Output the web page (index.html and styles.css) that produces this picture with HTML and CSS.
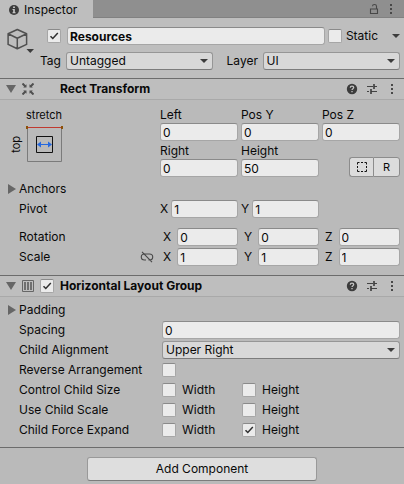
FILE: index.html
```html
<!DOCTYPE html>
<html lang="en">
<head>
<meta charset="utf-8">
<title>Inspector</title>
<link rel="stylesheet" href="styles.css">
</head>
<body>
<svg class="defs" aria-hidden="true">
  <symbol id="help" viewBox="0 0 12 12"><circle cx="6" cy="6" r="5.2" fill="#3c3c3c"/><path d="M4.3 4.8C4.3 3.6 5 3.1 6 3.1S7.7 3.7 7.7 4.6C7.7 5.7 6 5.7 6 7.1M6 8v1.3" fill="none" stroke="#c4c4c4" stroke-width="1.3"/></symbol>
  <symbol id="preset" viewBox="0 0 12 12"><path d="M1 3.500h6M8 3.500h3M1 8.500h2M5 8.500h6" fill="none" stroke="#444" stroke-width="1"/><path d="M8 1v5M5 6v5" fill="none" stroke="#3c3c3c" stroke-width="1.600"/></symbol>
  <symbol id="dots" viewBox="0 0 4 12"><path d="M1 1h2v2H1zM1 5h2v2H1zM1 9h2v2H1z" fill="#484848"/></symbol>
</svg>
<main class="inspector">
  <header class="tabbar">
    <div class="tab">
      <svg class="info" viewBox="0 0 12 12" aria-hidden="true"><circle cx="6" cy="6" r="5" fill="#3c3c3c"/><path d="M5.1 2.5h1.8v1.6H5.1zM4.5 5h2.3v3.2h.8v1H4.5v-1h.7V6h-.7z" fill="#cbcbcb"/></svg>
      Inspector
    </div>
    <div class="tab-tools">
      <button class="icon-btn" aria-label="Lock"><svg width="10" height="12" viewBox="0 0 10 12"><path d="M1.5 6h7v4.5h-7zM7.5 6V3.2C7.5 1 3.5 1 3.5 3.2" fill="none" stroke="#484848" stroke-width="1.1"/></svg></button>
      <button class="icon-btn" aria-label="Menu"><svg width="4" height="12"><use href="#dots"/></svg></button>
    </div>
  </header>

  <section class="object">
    <svg class="cube" viewBox="0 0 28 30" aria-hidden="true"><path d="M10.3 2.500l9.300 4.300v10.600l-9.300 4.400-9.200-4.400V6.800zM1.100 6.800l9.200 4.400 9.300-4.400M10.300 11.200v10.600" fill="none" stroke="#505050" stroke-width="1.500" stroke-linejoin="round"/><path d="M19.500 22h7.500l-3.750 4z" fill="#3c3c3c"/></svg>
    <div class="object-rows">
      <div class="name-row">
        <input class="check" type="checkbox" aria-label="Active" checked>
        <input class="field name" type="text" aria-label="Name" value="Resources">
        <label class="tick"><input class="check" type="checkbox"> Static</label>
        <button class="icon-btn static-menu" aria-label="Static options"><svg width="8" height="4" viewBox="0 0 8 4"><path d="M0 0h8L4 4z" fill="#3c3c3c"/></svg></button>
      </div>
      <div class="tag-row">
        <label class="tag-label" for="tag">Tag</label>
        <select id="tag" class="select tag"><option>Untagged</option></select>
        <label class="layer-label" for="layer">Layer</label>
        <select id="layer" class="select layer"><option>UI</option></select>
      </div>
    </div>
  </section>

  <section class="component">
    <header class="head">
      <button class="fold open" aria-label="Collapse Rect Transform"></button>
      <svg class="type-icon" viewBox="0 0 12 12" aria-hidden="true"><path d="M.5 .5l3 3M11.500 .5l-3 3M.5 11.500l3-3M11.500 11.500l-3-3" stroke="#505050" stroke-width="2"/><path d="M1.200 4.500h3.300V1.200zM10.800 4.500H7.500V1.200zM1.200 7.500h3.300v3.300zM10.800 7.500H7.500v3.300z" fill="#505050"/></svg>
      <h2>Rect Transform</h2>
      <button class="icon-btn" aria-label="Help"><svg width="12" height="12"><use href="#help"/></svg></button>
      <button class="icon-btn" aria-label="Presets"><svg width="12" height="12"><use href="#preset"/></svg></button>
      <button class="icon-btn" aria-label="Menu"><svg width="4" height="12"><use href="#dots"/></svg></button>
    </header>
    <div class="rect">
      <div class="anchor">
        <span class="anchor-x">stretch</span>
        <span class="anchor-y">top</span>
        <button class="icon-btn" aria-label="Anchor presets"><svg width="38" height="38" viewBox="0 0 38 38"><path d="M1.500 2v34.500h34V2" fill="none" stroke="#7b7b7b"/><path d="M1 2.500h35" stroke="#c03a30"/><path d="M0 1h2v3H0zM35 1h2v3h-2z" fill="#8a5208"/><path d="M10.500 11.500h16v16h-16z" fill="none" stroke="#111"/><path d="M12 19.500h13" stroke="#2468e0"/><path d="M11 19.500l4-3v6zM26 19.500l-4-3v6z" fill="#2468e0"/></svg></button>
      </div>
      <div class="triple stacked">
        <label>Left<input class="field" value="0"></label>
        <label>Pos Y<input class="field" value="0"></label>
        <label>Pos Z<input class="field" value="0"></label>
        <label>Right<input class="field" value="0"></label>
        <label>Height<input class="field" value="50"></label>
        <div class="modes">
          <button aria-label="Blueprint mode"><svg width="10" height="10" viewBox="0 0 10 10"><path d="M.5 2.500V.5h2M4 .5h2M7.500 .5h2v2M9.500 4v2M9.500 7.500v2h-2M6 9.500H4M2.500 9.500h-2v-2M.5 6V4" fill="none" stroke="#111"/></svg></button>
          <button>R</button>
        </div>
      </div>
    </div>
    <div class="rows">
      <div class="row"><button class="fold" aria-label="Expand Anchors"></button><span class="label">Anchors</span></div>
      <div class="row"><span class="label">Pivot</span>
        <div class="triple pivot"><label>X<input class="field" value="1"></label><label>Y<input class="field" value="1"></label></div></div>
    </div>
    <div class="rows spaced">
      <div class="row"><span class="label">Rotation</span>
        <div class="triple vector"><label>X<input class="field" value="0"></label><label>Y<input class="field" value="0"></label><label>Z<input class="field" value="0"></label></div></div>
      <div class="row"><span class="label">Scale
        <button class="icon-btn link" aria-label="Link scale axes"><svg width="14" height="12" viewBox="0 0 14 12"><path d="M6 9H4.500C.2 9 .2 3 4.500 3H9.500C13.800 3 13.800 9 9.500 9H8.500M2 .8l10 10.400" fill="none" stroke="#484848" stroke-width="1.100"/></svg></button></span>
        <div class="triple vector"><label>X<input class="field" value="1"></label><label>Y<input class="field" value="1"></label><label>Z<input class="field" value="1"></label></div></div>
    </div>
  </section>

  <section class="component">
    <header class="head">
      <button class="fold open" aria-label="Collapse Horizontal Layout Group"></button>
      <svg class="type-icon" viewBox="0 0 12 12" aria-hidden="true"><path d="M.5 .5h11v11H.5z" fill="none" stroke="#666"/><path d="M3 2v8M6 2v8M9 2v8" stroke="#5c5c5c" stroke-width="1.600"/></svg>
      <input class="check" type="checkbox" aria-label="Enable Horizontal Layout Group" checked>
      <h2>Horizontal Layout Group</h2>
      <button class="icon-btn" aria-label="Help"><svg width="12" height="12"><use href="#help"/></svg></button>
      <button class="icon-btn" aria-label="Presets"><svg width="12" height="12"><use href="#preset"/></svg></button>
      <button class="icon-btn" aria-label="Menu"><svg width="4" height="12"><use href="#dots"/></svg></button>
    </header>
    <div class="rows group">
      <div class="row"><button class="fold" aria-label="Expand Padding"></button><span class="label">Padding</span></div>
      <div class="row"><label class="label" for="spacing">Spacing</label><input id="spacing" class="field" value="0"></div>
      <div class="row"><label class="label" for="align">Child Alignment</label><select id="align" class="select"><option>Upper Right</option></select></div>
      <div class="row"><label class="label" for="reverse">Reverse Arrangement</label><input id="reverse" class="check" type="checkbox"></div>
      <div class="row"><span class="label">Control Child Size</span><label class="tick"><input class="check" type="checkbox">Width</label><label class="tick"><input class="check" type="checkbox">Height</label></div>
      <div class="row"><span class="label">Use Child Scale</span><label class="tick"><input class="check" type="checkbox">Width</label><label class="tick"><input class="check" type="checkbox">Height</label></div>
      <div class="row"><span class="label">Child Force Expand</span><label class="tick"><input class="check" type="checkbox">Width</label><label class="tick"><input class="check" type="checkbox" checked>Height</label></div>
    </div>
  </section>

  <footer class="footer"><button class="add">Add Component</button></footer>
</main>
</body>
</html>
```
FILE: styles.css
```css
* { box-sizing: border-box; }

body {
  margin: 0;
  background: #bababa;
  color: #090909;
  font: 12px/16px Inter, "Liberation Sans", sans-serif;
}

button, input, select { font: inherit; color: inherit; margin: 0; }
svg { display: block; flex: none; }
.defs { position: absolute; width: 0; height: 0; }

.icon-btn {
  display: flex;
  flex: none;
  justify-content: center;
  padding: 0;
  border: 0;
  background: none;
}

/* Tab strip */
.tabbar {
  display: flex;
  justify-content: space-between;
  height: 18px;
  background: #8f8f8f;
}
.tab {
  display: flex;
  align-items: center;
  gap: 4px;
  width: 93px;
  padding: 2px 0 0 8px;
  background: #bebebe;
}
.info { width: 12px; height: 12px; }
.tab-tools {
  display: flex;
  flex: 1;
  align-items: center;
  justify-content: flex-end;
  gap: 10px;
  padding-right: 11px;
  border-bottom: 1px solid #818181;
}

/* Shared controls */
.field, .select {
  flex: 1;
  width: 100%;
  min-width: 0;
  height: 18px;
  padding: 0 2px;
  border: 1px solid #a6a6a6;
  border-top-color: #8a8a8a;
  border-radius: 3px;
  background: #ebebeb;
}
.select {
  appearance: none;
  padding: 0 20px 0 3px;
  border-color: #969696;
  border-bottom-color: #7c7c7c;
  background: #d8d8d8 url("data:image/svg+xml,%3Csvg xmlns='http://www.w3.org/2000/svg' width='8' height='4'%3E%3Cpath d='M0 0h8L4 4z' fill='%233c3c3c'/%3E%3C/svg%3E") no-repeat right 4px center;
}
.check {
  appearance: none;
  flex: none;
  width: 14px;
  height: 14px;
  border: 1px solid #a6a6a6;
  border-top-color: #8a8a8a;
  border-radius: 2px;
  background: #ebebeb;
}
.check:checked {
  background: #ebebeb url("data:image/svg+xml,%3Csvg xmlns='http://www.w3.org/2000/svg' width='12' height='12'%3E%3Cpath d='M2.500 6.200l2.300 2.300 5-5.500' fill='none' stroke='%23303030' stroke-width='1.500'/%3E%3C/svg%3E") no-repeat center;
}
.tick { display: flex; align-items: center; gap: 4px; }

/* Object header */
.object {
  display: flex;
  gap: 5px;
  padding: 9px 4px 8px 7px;
  background: #bebebe;
}
.cube { width: 28px; height: 30px; }
.object-rows { flex: 1; min-width: 0; }
.name-row, .tag-row { display: flex; align-items: center; }
.name-row { padding-left: 7px; }
.name { margin: 0 3px 0 6px; font-weight: 700; }
.static-menu { margin-left: 14px; }
.tag-row { margin-top: 7px; }
.tag-label { width: 26px; }
.layer-label { margin-left: 14px; width: 36px; }
.tag { flex: 147; }
.layer { flex: 136; }

/* Component sections */
.component, .footer { border-top: 1px solid #6c6c6c; }
.head {
  display: flex;
  align-items: center;
  gap: 8px;
  height: 21px;
  padding: 0 6px 0 22px;
  border-bottom: 1px solid #a9a9a9;
  background: #bebebe;
  position: relative;
}
.head .icon-btn { width: 12px; }
.head h2 { flex: 1; margin: 0; font-size: 12px; font-weight: 700; }
.head .check { margin: 0 -2px; }
.type-icon { width: 12px; height: 12px; }
.type-icon + h2 { padding-left: 18px; }

.fold {
  position: absolute;
  left: 8px;
  width: 8px;
  height: 10px;
  padding: 0;
  border: 0;
  background: #666;
  clip-path: polygon(0 0, 100% 50%, 0 100%);
}
.fold.open {
  left: 6px;
  width: 10px;
  height: 8px;
  clip-path: polygon(0 0, 100% 0, 50% 100%);
}

.rect {
  display: flex;
  justify-content: space-between;
  padding: 7px 4px 2px 8px;
}
.anchor {
  display: grid;
  grid-template-columns: 18px 38px;
  grid-template-rows: 18px 38px;
  font-size: 11px;
}
.anchor-x { grid-column: 2; }
.anchor-y {
  writing-mode: vertical-rl;
  transform: rotate(180deg);
  justify-self: start;
  align-self: center;
}

.triple {
  display: grid;
  grid-template-columns: repeat(3, minmax(0, 1fr));
  flex: 1;
  gap: 0 3px;
}
.triple label { display: flex; align-items: center; }
.stacked { flex: 0 1 calc(100% - 152px); row-gap: 2px; }
.stacked label { flex-direction: column; align-items: stretch; }
.stacked .field { flex: none; }
.pivot { margin-left: -2px; }
.pivot .field { margin-left: 3px; }
.vector { column-gap: 6px; padding-left: 1px; }
.vector .field { margin-left: 6px; }

.modes { display: flex; justify-content: flex-end; align-items: flex-end; }
.modes button {
  display: flex;
  align-items: center;
  justify-content: center;
  width: 27px;
  height: 20px;
  padding: 0;
  border: 1px solid #8c8c8c;
  background: #dcdcdc;
  font-size: 11px;
}
.modes button:first-child { width: 24px; border-right: 0; border-radius: 3px 0 0 3px; }
.modes button:last-child { border-radius: 0 3px 3px 0; }

.rows { padding: 0 4px 0 19px; }
.rows.spaced { padding-top: 8px; padding-bottom: 8px; }
.rows.group { padding-top: 3px; padding-bottom: 7px; }
.row {
  position: relative;
  display: flex;
  align-items: center;
  height: 20px;
}
.row .fold { left: -11px; }
.label {
  display: flex;
  justify-content: space-between;
  flex: none;
  width: 143px;
}
.link { margin-right: 8px; align-self: center; }
.row .tick { width: 80px; gap: 6px; }

.footer { display: flex; justify-content: center; padding: 9px 4px; }
.add {
  width: 230px;
  height: 24px;
  border: 1px solid #999;
  border-bottom-color: #7c7c7c;
  border-radius: 3px;
  background: #dedede;
}
```
